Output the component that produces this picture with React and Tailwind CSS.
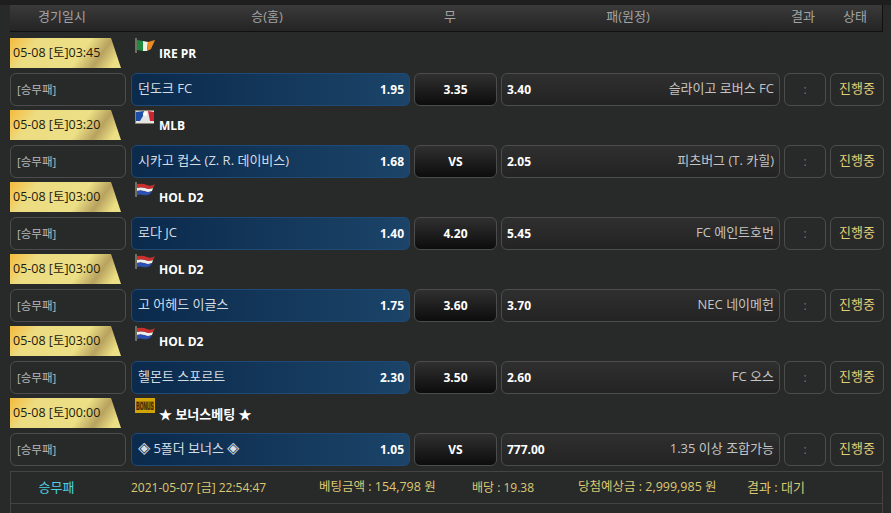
import React from 'react';

const FONT = 'font-["Open_Sans","Noto_Sans_CJK_KR",sans-serif]';

const IreFlag = () => (
  <svg width="20" height="16" viewBox="0 0 20 16">
    <rect x="0" y="0" width="2" height="15" fill="#6f6f62" />
    <path d="M2 2 L8 3 L8 13 L2 12 Z" fill="#1f8a3f" />
    <path d="M8 3 L13 4 L12 13 L8 13 Z" fill="#f1f1e6" />
    <path d="M13 4 L20 2 L16 11 L12 13 Z" fill="#ee8a22" />
  </svg>
);

const MlbFlag = () => (
  <svg width="20" height="16" viewBox="0 0 20 16">
    <rect x="0" y="0" width="19" height="14" fill="#8a8574" />
    <rect x="1" y="1" width="18" height="12" fill="#e4e4e4" />
    <path d="M1 2 L9 1 L8 6 L5 11 L1 11 Z" fill="#1d4fa6" />
    <path d="M13 1 L19 2 L19 11 L15 11 Z" fill="#c9262f" />
    <circle cx="10" cy="4" r="2" fill="#ffffff" />
  </svg>
);

const HolFlag = () => (
  <svg width="20" height="16" viewBox="0 0 20 16">
    <rect x="0" y="0" width="2" height="15" fill="#6f6f62" />
    <path d="M2 2 Q8 1 12 3 Q16 5 20 2 L18 6 Q14 8 10 6 Q6 5 2 6 Z" fill="#c9302c" />
    <path d="M2 6 Q6 5 10 6 Q14 8 18 6 L17 9 Q13 11 9 9 Q5 8 2 9 Z" fill="#eeeeee" />
    <path d="M2 9 Q5 8 9 9 Q13 11 17 9 L15 12 Q11 14 8 13 Q5 12 2 13 Z" fill="#2c4fb0" />
  </svg>
);

const BonusFlag = () => (
  <svg width="20" height="16" viewBox="0 0 20 16">
    <rect width="20" height="15" fill="#d0a505" />
    <rect x="1" y="3" width="18" height="9" fill="#a67f08" />
    <text transform="translate(10 12) scale(0.48 1)" textAnchor="middle" fontSize="10" fontWeight="700" fill="#3a1a05" fontFamily="Liberation Sans, sans-serif">BONUS</text>
  </svg>
);

const Diamond = () => <span className="text-[16px] leading-[16px] text-[#d8dde2]">◈</span>;

const matches = [
  { date: '05-08 [토]03:45', league: 'IRE PR', Flag: IreFlag, home: '던도크 FC', homeOdd: '1.95', draw: '3.35', awayOdd: '3.40', away: '슬라이고 로버스 FC' },
  { date: '05-08 [토]03:20', league: 'MLB', Flag: MlbFlag, home: '시카고 컵스 (Z. R. 데이비스)', homeOdd: '1.68', draw: 'VS', awayOdd: '2.05', away: '피츠버그 (T. 카힐)' },
  { date: '05-08 [토]03:00', league: 'HOL D2', Flag: HolFlag, home: '로다 JC', homeOdd: '1.40', draw: '4.20', awayOdd: '5.45', away: 'FC 에인트호번' },
  { date: '05-08 [토]03:00', league: 'HOL D2', Flag: HolFlag, home: '고 어헤드 이글스', homeOdd: '1.75', draw: '3.60', awayOdd: '3.70', away: 'NEC 네이메헌' },
  { date: '05-08 [토]03:00', league: 'HOL D2', Flag: HolFlag, home: '헬몬트 스포르트', homeOdd: '2.30', draw: '3.50', awayOdd: '2.60', away: 'FC 오스' },
  { date: '05-08 [토]00:00', league: '★ 보너스베팅 ★', bonus: true, Flag: BonusFlag, home: <><Diamond /> 5폴더 보너스 <Diamond /></>, homeOdd: '1.05', draw: 'VS', awayOdd: '777.00', away: '1.35 이상 조합가능' },
];

const cell = 'h-[33px] rounded-[6px] border border-[#4c4c4c] flex items-center';

const MatchGroup = ({ m }) => (
  <div>
    <div className="h-[30px] flex">
      <div className="w-[111px] h-[30px] flex items-center pl-[3px] text-[12.5px] text-[#1f1a0c] [clip-path:polygon(0_0,91%_0,100%_100%,0_100%)] bg-[linear-gradient(125deg,#f6bb3c_0%,#ecdc82_22%,#ecdf85_62%,#b8a25f_78%,#ecdf85_92%)]">
        {m.date}
      </div>
      <div className="ml-[14px] w-[20px] h-[16px]">
        <m.Flag />
      </div>
      <div className={`ml-[4px] pt-[8px] font-bold text-white leading-[16px] ${m.bonus ? 'text-[13px]' : 'text-[12px]'}`}>{m.league}</div>
    </div>
    <div className="mt-[5px] flex text-[12px] gap-[4px]">
      <div className={`${cell} w-[116px] mr-[1px] pl-[6px] text-[11.5px] text-[#b9b9b9]`}>[승무패]</div>
      <div className="h-[33px] w-[279px] rounded-[6px] border border-[#1f4a78] bg-[linear-gradient(90deg,#0b2a4c,#1b4468)] flex items-center justify-between pl-[6px] pr-[5px] text-[#d5dde4]">
        <span className="text-[13px] pb-[2px]">{m.home}</span>
        <span className="font-bold text-white">{m.homeOdd}</span>
      </div>
      <div className={`${cell} w-[83px] justify-center font-bold text-white bg-[linear-gradient(180deg,#303030,#0c0c0c)]`}>{m.draw}</div>
      <div className={`${cell} w-[279px] justify-between pl-[5px] pr-[5px] bg-[linear-gradient(180deg,#2f2f2f,#232323)] text-[#c4c4c4]`}>
        <span className="font-bold text-white">{m.awayOdd}</span>
        <span className="text-[13px] pb-[2px]">{m.away}</span>
      </div>
      <div className={`${cell} w-[42px] justify-center text-[#777]`}>:</div>
      <div className={`${cell} w-[54px] justify-center text-[13px] pb-[2px] text-[#e3cf78]`}>진행중</div>
    </div>
  </div>
);

export default function App() {
  return (
    <div className={`${FONT} h-[513px] overflow-hidden bg-[#282a2a]`}>
      <div className="h-[5px] bg-[#1e1e1e]" />
      <div className="pl-[10px] pr-[7px]">
        <div className="h-[27px] w-[873px] flex items-center text-[13px] text-[#a3a3a3] pb-[2px] border-b border-[#111] border-r bg-[linear-gradient(180deg,#3a3a3a,#242424)]">
          <div className="w-[104px] text-center">경기일시</div>
          <div className="w-[306px] text-center">승(홈)</div>
          <div className="w-[60px] text-center">무</div>
          <div className="w-[296px] text-center">패(원정)</div>
          <div className="w-[54px] text-center">결과</div>
          <div className="w-[50px] text-center">상태</div>
        </div>
        <div className="mt-[6px] flex flex-col gap-[4px]">
          {matches.map((m, i) => (
            <MatchGroup key={i} m={m} />
          ))}
        </div>
        <div className="mt-[5px] w-[873px] border border-[#444] h-[60px]">
          <div className="h-[32px] border-b border-[#444] flex items-center text-[12px] text-[#dcc873]">
            <div className="w-[91px] text-center text-[13px] text-[#4fd0e0]">승무패</div>
            <div className="ml-[29px] w-[188px]">2021-05-07 [금] 22:54:47</div>
            <div className="w-[153px] text-[12.5px]">베팅금액 : 154,798 원</div>
            <div className="w-[106px]">배당 : 19.38</div>
            <div className="w-[169px] text-[12.5px]">당첨예상금 : 2,999,985 원</div>
            <div className="text-[13px]">결과 : 대기</div>
          </div>
        </div>
      </div>
    </div>
  );
}
